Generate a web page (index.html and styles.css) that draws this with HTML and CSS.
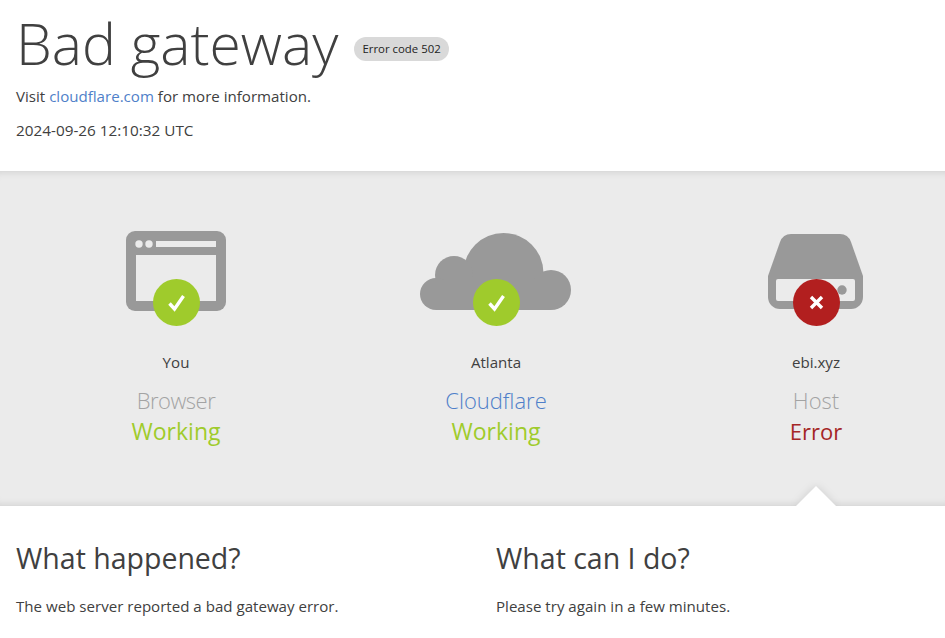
FILE: index.html
```html
<!DOCTYPE html>
<html lang="en">
<head>
    <meta charset="UTF-8">
    <meta name="viewport" content="width=device-width, initial-scale=1.0">
    <title>Bad gateway</title>
    <link rel="stylesheet" href="styles.css">
</head>
<body>
    <header class="page-header">
        <div class="title-row">
            <h1>Bad gateway</h1>
            <span class="error-code">Error code 502</span>
        </div>
        <p class="visit">Visit <a href="#">cloudflare.com</a> for more information.</p>
        <p class="timestamp">2024-09-26 12:10:32 UTC</p>
    </header>

    <section class="status-band">
        <div class="status-item">
            <div class="icon-wrap">
                <svg class="icon" width="100" height="80" viewBox="126 231 100 80">
                    <rect x="126" y="231" width="100" height="80" rx="9" fill="#999"/>
                    <rect x="136" y="255" width="80" height="46" fill="#ebebeb"/>
                    <circle cx="139" cy="244" r="3.7" fill="#ebebeb"/>
                    <circle cx="149" cy="244" r="3.7" fill="#ebebeb"/>
                    <rect x="156" y="241" width="60" height="6" fill="#ebebeb"/>
                </svg>
                <span class="badge badge-ok">
                    <svg width="47" height="47" viewBox="0 0 47 47"><path d="M16.5 24.5l5 5.5 9-13" fill="none" stroke="#fff" stroke-width="3.4"/></svg>
                </span>
            </div>
            <div class="place">You</div>
            <div class="kind kind-browser">Browser</div>
            <div class="state state-ok">Working</div>
        </div>

        <div class="status-item">
            <div class="icon-wrap">
                <svg class="icon" width="152" height="80" viewBox="420 231 152 80">
                    <g fill="#999">
                        <circle cx="503.5" cy="273" r="40"/>
                        <circle cx="454" cy="275" r="19"/>
                        <circle cx="436" cy="294" r="16"/>
                        <circle cx="551" cy="290" r="20"/>
                        <rect x="436" y="280" width="115" height="30"/>
                    </g>
                </svg>
                <span class="badge badge-ok">
                    <svg width="47" height="47" viewBox="0 0 47 47"><path d="M16.5 24.5l5 5.5 9-13" fill="none" stroke="#fff" stroke-width="3.4"/></svg>
                </span>
            </div>
            <div class="place">Atlanta</div>
            <div class="kind kind-link">Cloudflare</div>
            <div class="state state-ok">Working</div>
        </div>

        <div class="status-item">
            <div class="icon-wrap">
                <svg class="icon" width="96" height="80" viewBox="768 231 96 80">
                    <path d="M791 234H840Q848 234 851 242L863 276V297A12 12 0 0 1 851 309H780A12 12 0 0 1 768 297V276L780 242Q783 234 791 234Z" fill="#999"/>
                    <rect x="776" y="279" width="79" height="22" rx="2" fill="#ebebeb"/>
                    <circle cx="842" cy="290" r="4.7" fill="#999"/>
                </svg>
                <span class="badge badge-error">
                    <svg width="47" height="47" viewBox="0 0 47 47"><path d="M18 18l11 11M29 18L18 29" fill="none" stroke="#fff" stroke-width="3.4"/></svg>
                </span>
            </div>
            <div class="place">ebi.xyz</div>
            <div class="kind">Host</div>
            <div class="state state-error">Error</div>
            <span class="pointer"></span>
        </div>
    </section>

    <section class="details">
        <div class="detail-col">
            <h2>What happened?</h2>
            <p>The web server reported a bad gateway error.</p>
        </div>
        <div class="detail-col">
            <h2>What can I do?</h2>
            <p>Please try again in a few minutes.</p>
        </div>
    </section>
</body>
</html>
```

FILE: styles.css
```css
* {
    margin: 0;
    padding: 0;
    box-sizing: border-box;
}

html, body {
    height: 100%;
    overflow: hidden;
}

body {
    background-color: #fff;
    color: #404040;
    font-family: 'Open Sans', sans-serif;
    font-size: 15.1px;
    line-height: 24px;
}

a {
    color: #4f7fc9;
    text-decoration: none;
}

.page-header {
    height: 171px;
    padding: 4px 16px 0;
}

.title-row {
    display: flex;
    align-items: center;
    gap: 16px;
    margin-bottom: 2px;
}

h1 {
    font-size: 57px;
    font-weight: 300;
    line-height: 78px;
}

.error-code {
    margin-top: 12px;
    background-color: #d9d9d9;
    border-radius: 12px;
    color: #222;
    font-size: 11.4px;
    line-height: 24px;
    padding: 0 8px;
}

.visit {
    margin-bottom: 10px;
}

.timestamp {
    font-size: 15.3px;
}

.status-band {
    display: grid;
    grid-template-columns: repeat(3, 320px);
    width: 945px;
    height: 335px;
    padding: 60px 0 0 16px;
    background-color: #ebebeb;
    box-shadow: inset 0 8px 8px -8px rgba(0, 0, 0, 0.15), inset 0 -8px 8px -8px rgba(0, 0, 0, 0.15);
}

.status-item {
    position: relative;
    display: flex;
    flex-direction: column;
    align-items: center;
    height: 275px;
}

.icon-wrap {
    position: relative;
    display: flex;
    justify-content: center;
    width: 100%;
    height: 95px;
}

.icon {
    display: block;
}

.badge {
    position: absolute;
    left: 50%;
    top: 48px;
    width: 47px;
    height: 47px;
    margin-left: -23.5px;
    border-radius: 50%;
}

.badge svg {
    display: block;
}

.badge-ok {
    background-color: #9fcb2c;
}

.badge-error {
    background-color: #b21f1f;
}

.place {
    margin-top: 24px;
    line-height: 24px;
}

.kind, .state {
    font-size: 22px;
    font-weight: 300;
    line-height: 31px;
}

.kind {
    margin-top: 11px;
    color: #a3a3a3;
}

.kind-browser {
    letter-spacing: -0.5px;
}

.kind-link {
    color: #4f7fc9;
}

.state-ok {
    color: #9fcb2c;
    font-size: 23px;
    font-weight: 400;
}

.state-error {
    color: #a52626;
    font-weight: 400;
}

.pointer {
    position: absolute;
    left: 50%;
    bottom: 0;
    margin-left: -20px;
    border-left: 20px solid transparent;
    border-right: 20px solid transparent;
    border-bottom: 20px solid #fff;
    filter: drop-shadow(0 0 4px rgba(0, 0, 0, 0.12));
}

.details {
    position: relative;
    display: grid;
    grid-template-columns: 480px 1fr;
    height: 132px;
    padding: 32px 16px 0;
    background-color: #fff;
}

h2 {
    font-size: 28.5px;
    font-weight: 400;
    line-height: 40px;
    margin-bottom: 16px;
}
```
